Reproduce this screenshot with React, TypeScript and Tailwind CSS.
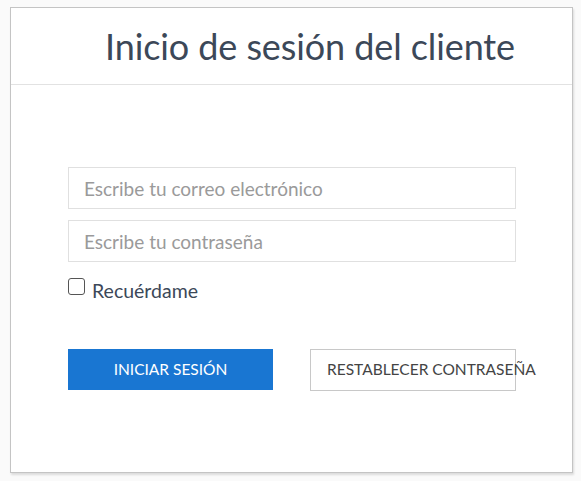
import React from "react";

export default function App() {
  return (
    <div className="w-[581px] h-[481px] bg-[#fafafa] pt-[7px] pl-[10px]" style={{ fontFamily: "Lato, 'Noto Sans', sans-serif" }}>
      <div className="w-[563px] h-[466px] bg-white border border-[#c4c4c4] shadow-[1px_2px_2px_rgba(0,0,0,0.12)] flex flex-col">
        <div className="h-[77px] border-b border-[#e2e2e2] pl-[94px] pt-[18px]">
          <h1 className="text-[36px] leading-[40px] text-[#3c4858] tracking-[-0.1px]">Inicio de sesión del cliente</h1>
        </div>
        <div className="pl-[57px] pt-[82px] flex flex-col">
          <input
            className="w-[448px] h-[42px] border border-[#e0e0e0] px-[15px] text-[19px] text-[#333] placeholder:text-[#9a9a9a] outline-none"
            placeholder="Escribe tu correo electrónico"
          />
          <input
            type="password"
            className="mt-[11px] w-[448px] h-[42px] border border-[#e0e0e0] px-[15px] text-[19px] text-[#333] placeholder:text-[#9a9a9a] outline-none"
            placeholder="Escribe tu contraseña"
          />
          <label className="mt-[16px] flex items-start h-[24px] gap-[7px]">
            <span className="w-[17px] h-[17px] rounded-[3px] border border-[#555] bg-white" />
            <span className="text-[19.5px] leading-[24px] mt-[1px] text-[#3c4858]">Recuérdame</span>
          </label>
          <div className="mt-[47px] flex gap-[37px]">
            <button className="w-[205px] h-[41px] bg-[#1976d2] text-white text-[15.5px] uppercase">INICIAR SESIÓN</button>
            <button className="w-[206px] h-[42px] border border-[#c8c8c8] bg-white text-[#444] text-[15.5px] pl-[16px] text-left whitespace-nowrap overflow-visible">RESTABLECER CONTRASEÑA</button>
          </div>
        </div>
      </div>
    </div>
  );
}
